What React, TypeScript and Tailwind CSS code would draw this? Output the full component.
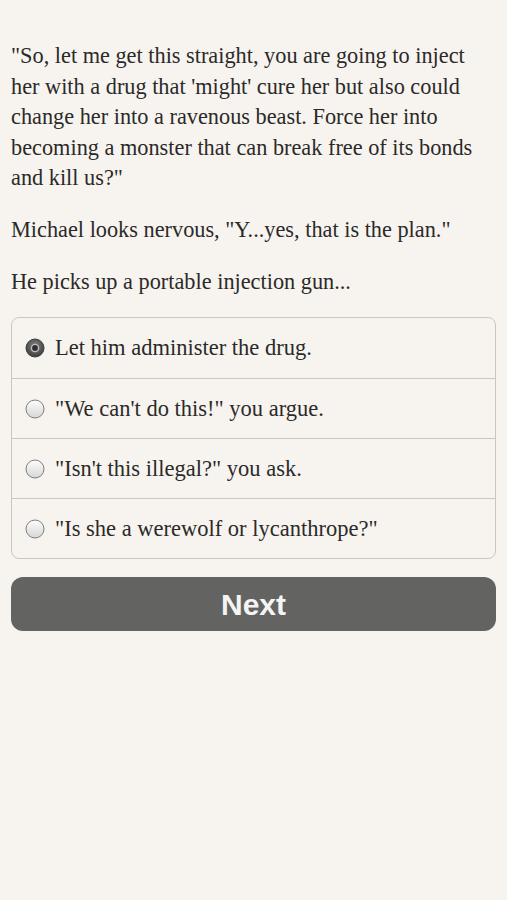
import React from "react";

const options = [
  "Let him administer the drug.",
  "\"We can't do this!\" you argue.",
  "\"Isn't this illegal?\" you ask.",
  "\"Is she a werewolf or lycanthrope?\"",
];

function Radio({ checked }: { checked: boolean }) {
  return (
    <svg width="20" height="20" viewBox="0 0 20 20" className="shrink-0">
      <defs>
        <linearGradient id="off" x1="0" y1="0" x2="0" y2="1">
          <stop offset="0" stopColor="#fdfdfd" />
          <stop offset="1" stopColor="#d6d6d6" />
        </linearGradient>
        <radialGradient id="on" cx="0.5" cy="0.4" r="0.6">
          <stop offset="0" stopColor="#8a8a8a" />
          <stop offset="1" stopColor="#3a3a3a" />
        </radialGradient>
      </defs>
      {checked ? (
        <>
          <circle cx="10" cy="10" r="9" fill="url(#on)" stroke="#3c3c3c" strokeWidth="1" />
          <circle cx="10" cy="10" r="3.6" fill="#2e2e2e" stroke="#bdbdbd" strokeWidth="1.4" />
        </>
      ) : (
        <circle cx="10" cy="10" r="9" fill="url(#off)" stroke="#7d7d7d" strokeWidth="1" />
      )}
    </svg>
  );
}

export default function App() {
  return (
    <div
      className="min-h-[900px] w-full bg-[#f7f4f0] px-[11px] pt-[41px] text-[#2b2a28]"
      style={{ fontFamily: "'Liberation Serif', serif" }}
    >
      <div className="text-[22.3px] leading-[30.6px]">
        <p>
          "So, let me get this straight, you are going to inject her with a drug that 'might' cure her but also could change her into a ravenous beast. Force her into becoming a monster that can break free of its bonds and kill us?"
        </p>
        <p className="mt-[21px]">Michael looks nervous, "Y...yes, that is the plan."</p>
        <p className="mt-[21px]">He picks up a portable injection gun...</p>
      </div>
      <div className="mt-[20px] overflow-hidden rounded-[8px] border border-[#c9c7c4]">
        {options.map((o, i) => (
          <div
            key={i}
            className={`flex h-[60px] items-center gap-[10px] pl-[13px] text-[22.5px] ${i > 0 ? "border-t border-[#c9c7c4]" : ""}`}
          >
            <Radio checked={i === 0} />
            <span>{o}</span>
          </div>
        ))}
      </div>
      <button
        className="mt-[18px] flex h-[54px] w-full items-center justify-center rounded-[12px] bg-[#636361] text-[30px] font-bold text-[#f4f4f4]"
        style={{ fontFamily: "'Liberation Sans', Arial, sans-serif" }}
      >
        Next
      </button>
    </div>
  );
}
